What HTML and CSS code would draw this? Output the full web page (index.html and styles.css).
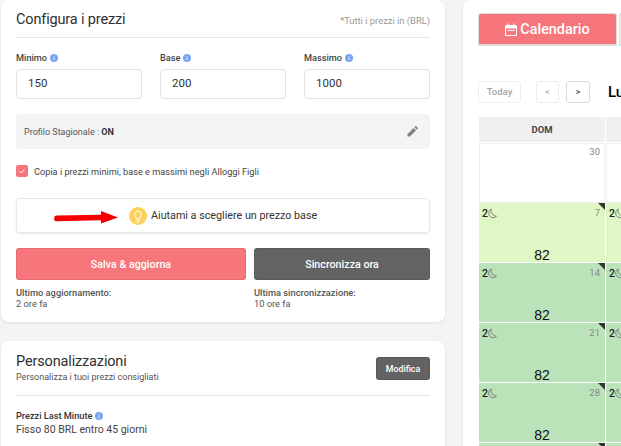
FILE: index.html
```html
<!DOCTYPE html>
<html lang="it">
<head>
<meta charset="utf-8">
<title>Configura i prezzi</title>
<link rel="stylesheet" href="styles.css">
</head>
<body>
<svg width="0" height="0" class="defs">
  <symbol id="moon" viewBox="0 0 10 12"><path d="M3.800 1a5 5 0 1 0 5.600 8 5.200 5.200 0 0 1-3.300-1.300A5 5 0 0 1 3.800 1z" fill="none" stroke="#777" stroke-width="1"/></symbol>
  <symbol id="info" viewBox="0 0 8 8"><circle cx="4" cy="4" r="4" fill="#7ba4f5"/><rect x="3.500" y="3.400" width="1" height="2.800" fill="#dbe6fd"/><rect x="3.500" y="1.800" width="1" height="1" fill="#dbe6fd"/></symbol>
</svg>
<div class="page">
  <div class="left">
    <section class="card card-price">
      <header class="head">
        <h2 class="title">Configura i prezzi</h2>
        <span class="note">*Tutti i prezzi in (BRL)</span>
      </header>
      <div class="fields">
        <div class="field">
          <div class="label">Minimo <svg class="info"><use href="#info"/></svg></div>
          <div class="input">150</div>
        </div>
        <div class="field">
          <div class="label">Base <svg class="info"><use href="#info"/></svg></div>
          <div class="input">200</div>
        </div>
        <div class="field">
          <div class="label">Massimo <svg class="info"><use href="#info"/></svg></div>
          <div class="input">1000</div>
        </div>
      </div>
      <div class="profile">
        <span>Profilo Stagionale : <b>ON</b></span>
        <svg class="pencil" viewBox="0 0 12 12"><path d="M0.500 11.500v-2.600L7.200 2.200l2.600 2.600-6.700 6.700zM8 1.400l1-1a.8.8 0 0 1 1.100 0l1.500 1.500a.8.8 0 0 1 0 1.100l-1 1z" fill="#808080"/></svg>
      </div>
      <label class="check">
        <span class="box"><svg viewBox="0 0 12 12"><path d="M3.500 6.200l1.800 1.800 3.200-3.600" fill="none" stroke="#fff" stroke-width="1"/></svg></span>
        Copia i prezzi minimi, base e massimi negli Alloggi Figli
      </label>
      <div class="helper">
        <svg class="arrow" viewBox="0 0 64 13"><path d="M3 4.500L47 3.700V0L64 6.500 47 12.500V9.300L3 10.300a2.900 2.900 0 0 1 0-5.800z" fill="#f50000"/></svg>
        <svg class="bulb" viewBox="0 0 18 18"><circle cx="9" cy="9" r="9" fill="#ffcf5c"/><path d="M7.300 11.700c0-1.500-1.700-2.100-1.700-4.200a3.400 3.400 0 0 1 6.800 0c0 2.100-1.700 2.700-1.700 4.200zM7.500 13.400h3M8 15h2" fill="none" stroke="#fff" stroke-width="1"/></svg>
        <span>Aiutami a scegliere un prezzo base</span>
      </div>
      <div class="actions">
        <div class="action action-save">
          <button class="btn btn-red">Salva &amp; aggiorna</button>
          <p class="meta"><b>Ultimo aggiornamento:</b><br>2 ore fa</p>
        </div>
        <div class="action action-sync">
          <button class="btn btn-dark">Sincronizza ora</button>
          <p class="meta"><b>Ultima sincronizzazione:</b><br>10 ore fa</p>
        </div>
      </div>
    </section>
    <section class="card card-custom">
      <header class="head2">
        <div>
          <h2 class="title">Personalizzazioni</h2>
          <p class="sub">Personalizza i tuoi prezzi consigliati</p>
        </div>
        <button class="btn-edit">Modifica</button>
      </header>
      <div class="label label-lm">Prezzi Last Minute <svg class="info"><use href="#info"/></svg></div>
      <div class="value">Fisso 80 BRL entro 45 giorni</div>
    </section>
  </div>
  <section class="card right">
    <div class="tabs">
      <div class="tab tab-on">
        <svg class="cal" viewBox="0 0 12 13"><path d="M1.500 2.500h9a1 1 0 0 1 1 1v8a1 1 0 0 1-1 1h-9a1 1 0 0 1-1-1v-8a1 1 0 0 1 1-1zM3 .5v2M9 .5v2" fill="none" stroke="#fff" stroke-width="1.100"/><path d="M1 3h10v2.500H1zM2.500 7h7v1h-7z" fill="#fff"/></svg>
        Calendario
      </div>
      <div class="tab"></div>
    </div>
    <div class="toolbar">
      <button class="tool tool-today">Today</button>
      <button class="tool tool-prev">&lt;</button>
      <button class="tool tool-next">&gt;</button>
      <span class="month">Lu</span>
    </div>
    <div class="cal-grid">
      <div class="th">DOM</div><div class="th"></div>
      <div class="cell cell-blank"><span class="date">30</span></div><div class="cell cell-blank"></div>

      <div class="cell cell-light"><i class="tri"></i><span class="nights">2<svg class="moon"><use href="#moon"/></svg></span><span class="date">7</span><span class="price">82</span></div>
      <div class="cell cell-light"><span class="nights">2<svg class="moon"><use href="#moon"/></svg></span></div>

      <div class="cell"><i class="tri"></i><span class="nights">2<svg class="moon"><use href="#moon"/></svg></span><span class="date">14</span><span class="price">82</span></div>
      <div class="cell"><span class="nights">2<svg class="moon"><use href="#moon"/></svg></span></div>

      <div class="cell"><i class="tri"></i><span class="nights">2<svg class="moon"><use href="#moon"/></svg></span><span class="date">21</span><span class="price">82</span></div>
      <div class="cell"><span class="nights">2<svg class="moon"><use href="#moon"/></svg></span></div>

      <div class="cell"><i class="tri"></i><span class="nights">2<svg class="moon"><use href="#moon"/></svg></span><span class="date">28</span><span class="price">82</span></div>
      <div class="cell"><span class="nights">2<svg class="moon"><use href="#moon"/></svg></span></div>

      <div class="cell"><i class="tri"></i></div>
      <div class="cell"></div>
    </div>
  </section>
</div>
</body>
</html>
```

FILE: styles.css
```css
* { box-sizing: border-box; }
html, body { margin: 0; padding: 0; height: 446px; overflow: hidden; }
body { background: #f3f4f6; font-family: Roboto, "Liberation Sans", sans-serif; color: #333; }
.defs { position: absolute; }
.page { display: flex; width: 621px; height: 446px; overflow: hidden; padding-left: 1px; }
.left { flex: 0 0 444px; display: flex; flex-direction: column; gap: 19px; }
.card { background: #fff; border-radius: 8px; box-shadow: 0 1px 3px rgba(0,0,0,.09); flex: none; }
.card-price { height: 322px; padding: 0 15px; }
.card-custom { height: 140px; padding: 0 15px; }
.head { height: 38px; display: flex; justify-content: space-between; align-items: center; border-bottom: 1px solid #e5e5e5; padding-top: 3px; }
.title { margin: 0; font-size: 14.500px; font-weight: 400; letter-spacing: -.15px; color: #2f2f2f; line-height: 20px; }
.note { font-size: 9.400px; color: #999; }
.fields { display: flex; gap: 18px; margin-top: 13px; }
.field { flex: 1; }
.label { font-size: 9.200px; font-weight: 500; color: #444; height: 14px; line-height: 14px; display: flex; align-items: center; gap: 3px; }
.info { width: 8px; height: 8px; }
.input { margin-top: 4px; height: 30px; border: 1px solid #e3e3e3; border-radius: 4px; padding-left: 11px; font-size: 11.500px; line-height: 27px; color: #333; }
.profile { margin-top: 15px; height: 35px; background: #f3f4f6; border-radius: 4px; padding: 0 12px 0 8px; display: flex; justify-content: space-between; align-items: center; font-size: 9px; color: #555; }
.profile b { color: #333; }
.pencil { width: 11px; height: 11px; }
.check { margin-top: 16px; height: 12px; display: flex; align-items: center; gap: 6px; font-size: 9.200px; color: #444; }
.box { width: 12px; height: 12px; background: #f6767b; border-radius: 2px; display: flex; }
.helper { margin-top: 21px; height: 35px; border: 1px solid #e8e8e8; border-radius: 4px; box-shadow: 0 1px 2px rgba(0,0,0,.1); display: flex; align-items: center; font-size: 10.750px; color: #333; padding-left: 37px; }
.arrow { width: 64px; height: 13px; margin: 4px 11px 0 0; }
.bulb { width: 18px; height: 18px; margin-right: 4px; }
.actions { display: flex; gap: 8px; margin-top: 15px; }
.action-save { flex: 0 0 230px; }
.action-sync { flex: 1; }
.btn { display: block; width: 100%; height: 32px; border-radius: 3px; border: 1px solid rgba(0,0,0,.08); color: #fff; font: 500 10.700px Roboto, "Liberation Sans", sans-serif; }
.btn-red { background: #f6767b; }
.btn-dark { background: #636363; }
.meta { margin: 7px 0 0; font-size: 9.300px; line-height: 11px; color: #555; }
.meta b { font-weight: 500; }
.head2 { height: 55px; padding-top: 11px; display: flex; justify-content: space-between; border-bottom: 1px solid #e5e5e5; }
.head2 .title { line-height: 19px; }
.sub { margin: 0; font-size: 9px; line-height: 12px; color: #555; }
.btn-edit { margin-top: 5px; width: 54px; height: 23px; background: #636363; color: #fff; border: 1px solid rgba(0,0,0,.1); border-radius: 3px; font: 500 8.800px Roboto, "Liberation Sans", sans-serif; padding: 0; }
.label-lm { margin-top: 13px; color: #333; }
.value { font-size: 10.500px; line-height: 13px; color: #444; }
.right { margin-left: 18px; flex: 1; min-width: 0; height: 460px; padding: 13px 0 0 15px; overflow: hidden; border-radius: 8px 0 0 8px; }
.tabs { display: flex; gap: 2px; width: 500px; }
.tab { width: 139px; height: 33px; background: #f3f3f3; border-radius: 3px 3px 0 0; border: 1px solid #ddd; border-bottom-width: 2px; flex: none; }
.tab-on { background: #f6767b; color: #fff; font-size: 14.400px; font-weight: 500; display: flex; align-items: center; justify-content: center; gap: 3px; }
.cal { width: 12px; height: 13px; }
.toolbar { display: flex; align-items: center; width: 500px; margin-top: 34px; height: 23px; }
.tool { height: 22px; background: #fff; border: 1px solid #eee; border-radius: 3px; color: #a5a5a5; font: 400 9.500px Roboto, "Liberation Sans", sans-serif; padding: 0; }
.tool-today { width: 43px; font-weight: 500; }
.tool-prev { width: 23px; margin-left: 15px; }
.tool-next { width: 24px; margin-left: 7px; border-color: #ddd; color: #333; }
.month { margin-left: 18px; font: 500 15px Roboto, "Liberation Sans", sans-serif; color: #000; white-space: nowrap; }
.cal-grid { display: grid; grid-template-columns: repeat(2, 126px); column-gap: 1px; width: 300px; margin-top: 14px; margin-left: 1px; }
.th { height: 25px; background: #f0f0f0; margin-bottom: 1px; font-size: 9.500px; font-weight: 700; color: #444; display: flex; align-items: center; justify-content: center; }
.cell { position: relative; height: 60px; background: #bbe3ba; border-bottom: 1px solid #fff; font-family: "Liberation Sans", sans-serif; }
.cell-blank { background: #fff; border: 1px solid #f0f0f0; }
.cell-light { background: #dff7c5; }
.nights { position: absolute; left: 3px; top: 4px; font: 500 10.500px Roboto, sans-serif; color: #222; display: flex; align-items: center; }
.moon { width: 9px; height: 11px; }
.date { position: absolute; right: 5px; top: 4px; font: 400 9.500px Roboto, sans-serif; color: #888; }
.cell-blank .date { top: 2px; right: 4px; }
.price { position: absolute; left: 0; right: 0; bottom: 0; text-align: center; font-size: 14px; line-height: 14px; color: #111; }
.tri { position: absolute; right: 0; top: 0; width: 0; height: 0; border-top: 7px solid #333; border-left: 7px solid transparent; }
```
